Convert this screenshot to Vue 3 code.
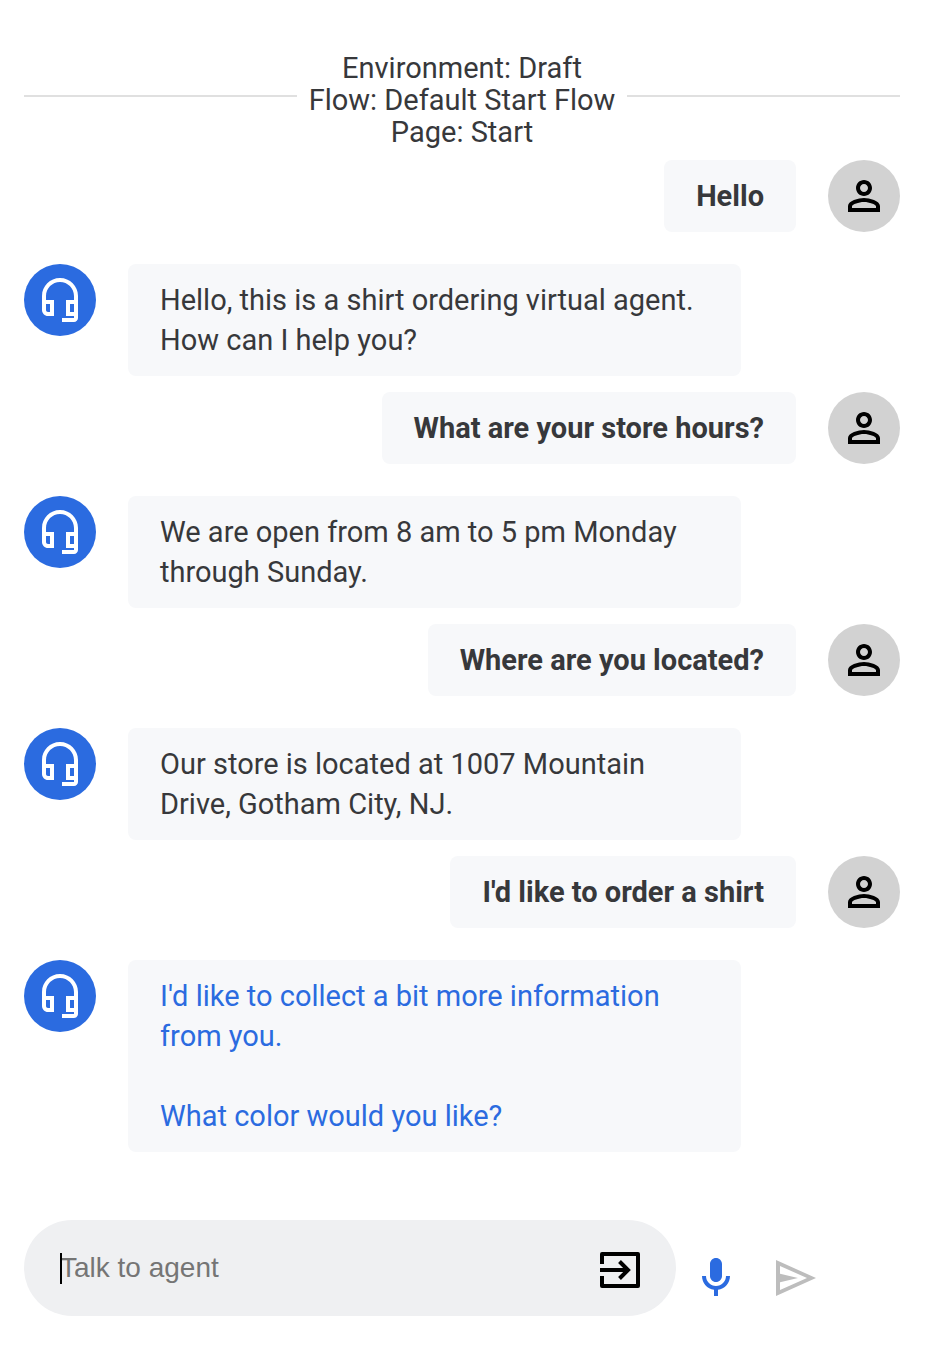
<script setup>
import { ref } from 'vue'

const draft = ref('')

const context = ['Environment: Draft', 'Flow: Default Start Flow', 'Page: Start']

const messages = [
  { from: 'user', text: 'Hello' },
  { from: 'agent', text: 'Hello, this is a shirt ordering virtual agent. How can I help you?' },
  { from: 'user', text: 'What are your store hours?' },
  { from: 'agent', text: 'We are open from 8 am to 5 pm Monday through Sunday.' },
  { from: 'user', text: 'Where are you located?' },
  { from: 'agent', text: 'Our store is located at 1007 Mountain Drive, Gotham City, NJ.' },
  { from: 'user', text: "I'd like to order a shirt" },
  {
    from: 'agent',
    active: true,
    text: "I'd like to collect a bit more information from you.\n\nWhat color would you like?",
  },
]
</script>

<template>
  <main class="simulator">
    <header class="context">
      <div class="context-text">
        <div v-for="line in context" :key="line">{{ line }}</div>
      </div>
    </header>

    <section class="messages" aria-label="Conversation">
      <div v-for="(m, i) in messages" :key="i" class="row" :class="m.from">
        <div class="avatar">
          <svg v-if="m.from === 'agent'" viewBox="0 0 24 24" aria-hidden="true">
            <path
              fill-rule="evenodd"
              d="M12 1c-4.97 0-9 4.03-9 9v7c0 1.66 1.34 3 3 3h3v-8H5v-2c0-3.87 3.13-7 7-7s7 3.13 7 7v2h-4v8h4v1h-6v2h6c1.1 0 2-.9 2-2V10c0-4.97-4.03-9-9-9zM7 14v4H6c-.55 0-1-.45-1-1v-3h2zm12 0v4h-2v-4h2z"
            />
          </svg>
          <svg v-else viewBox="0 0 24 24" aria-hidden="true">
            <path
              fill-rule="evenodd"
              d="M12 6c1.1 0 2 .9 2 2s-.9 2-2 2-2-.9-2-2 .9-2 2-2m0 9c2.7 0 5.8 1.29 6 2v1H6v-.99c.2-.72 3.3-2.01 6-2.01m0-11C9.79 4 8 5.79 8 8s1.79 4 4 4 4-1.79 4-4-1.79-4-4-4zm0 9c-2.67 0-8 1.34-8 4v3h16v-3c0-2.66-5.33-4-8-4z"
            />
          </svg>
        </div>
        <p class="bubble" :class="{ active: m.active }">{{ m.text }}</p>
      </div>
    </section>

    <form class="composer" @submit.prevent>
      <div class="field">
        <span v-if="!draft" class="caret"></span>
        <input v-model="draft" type="text" placeholder="Talk to agent" aria-label="Talk to agent" />
        <button type="button" class="enter" aria-label="Insert event">
          <svg viewBox="0 0 40 36" fill="none" stroke="#000" stroke-width="4" aria-hidden="true">
            <path stroke-linejoin="round" d="M2 12V2H38V34H2V24" />
            <path d="M0 18H28" />
            <path d="M19.5 9.5L28 18L19.5 26.5" />
          </svg>
        </button>
      </div>
      <button type="button" class="action mic" aria-label="Speak">
        <svg viewBox="0 0 24 24" aria-hidden="true">
          <path
            d="M12 14c1.66 0 3-1.34 3-3V5c0-1.66-1.34-3-3-3S9 3.34 9 5v6c0 1.66 1.34 3 3 3zm5-3c0 2.76-2.24 5-5 5s-5-2.24-5-5H5c0 3.53 2.61 6.43 6 6.92V21h2v-3.08c3.39-.49 6-3.39 6-6.92h-2z"
          />
        </svg>
      </button>
      <button type="submit" class="action send" aria-label="Send">
        <svg viewBox="0 0 40 36" aria-hidden="true">
          <path fill-rule="evenodd" d="M0 0L40 18L0 36ZM4 6V30L31 18Z" />
          <path d="M3 13.5L22 18L3 22.5Z" />
        </svg>
      </button>
    </form>
  </main>
</template>

<style>
body {
  background: #fff;
}
</style>

<style scoped>
.simulator {
  box-sizing: border-box;
  padding: 52px 44px 30px 24px;
  font: 400 29px/40px Roboto, "Liberation Sans", sans-serif;
  color: #37383b;
}

.context {
  display: flex;
  align-items: center;
  gap: 12px;
  line-height: 32px;
  text-align: center;
}

.context::before,
.context::after {
  content: "";
  flex: 1;
  height: 2px;
  margin-bottom: 8px;
  background: #e0e0e0;
}

.messages {
  padding-top: 12px;
}

.row {
  display: flex;
  align-items: flex-start;
  gap: 32px;
}

.row.user {
  flex-direction: row-reverse;
  margin-bottom: 32px;
  font-weight: 700;
}

.row.agent {
  margin-bottom: 16px;
}

.avatar {
  display: flex;
  align-items: center;
  justify-content: center;
  flex: none;
  width: 72px;
  height: 72px;
  border-radius: 50%;
}

.avatar svg {
  width: 48px;
  height: 48px;
}

.user .avatar {
  background: #d2d2d2;
  fill: #000;
}

.agent .avatar {
  background: #2b6be0;
  fill: #fff;
}

.bubble {
  box-sizing: border-box;
  margin: 0;
  padding: 16px 32px;
  border-radius: 8px;
  background: #f7f8fa;
  white-space: pre-line;
}

.agent .bubble {
  width: 70%;
}

.bubble.active {
  color: #2b6be0;
}

.composer {
  display: flex;
  align-items: center;
  margin-top: 68px;
  padding-right: 64px;
}

.field {
  position: relative;
  display: flex;
  align-items: center;
  flex: 1;
  box-sizing: border-box;
  min-width: 0;
  height: 96px;
  padding: 0 36px;
  border-radius: 48px;
  background: #eff0f2;
}

.field input {
  flex: 1;
  min-width: 0;
  padding: 0;
  border: 0;
  outline: 0;
  background: transparent;
  font: 400 28px/32px "Liberation Sans", Arial, sans-serif;
  color: #37383b;
}

.field input::placeholder {
  color: #757575;
  opacity: 1;
}

.caret {
  position: absolute;
  left: 36px;
  top: 33px;
  width: 2px;
  height: 31px;
  background: #000;
}

button {
  display: flex;
  align-items: center;
  justify-content: center;
  padding: 0;
  border: 0;
  background: transparent;
  cursor: pointer;
}

.enter svg,
.send svg {
  width: 40px;
  height: 36px;
}

.enter {
  padding-top: 4px;
}

.action {
  width: 80px;
  height: 80px;
  padding-top: 20px;
}

.mic svg {
  width: 48px;
  height: 48px;
  fill: #2b6be0;
}

.send svg {
  fill: #bdbdbd;
}
</style>
